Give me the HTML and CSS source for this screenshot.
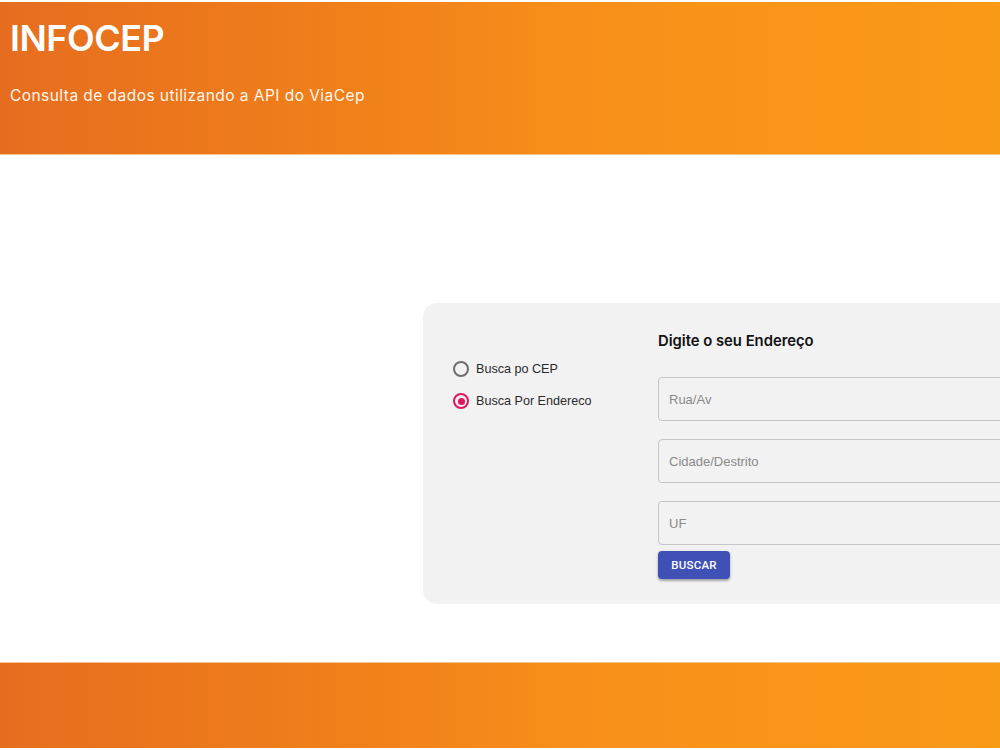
FILE: index.html
```html
<!DOCTYPE html>
<html lang="pt-BR">
<head>
<meta charset="utf-8">
<title>INFOCEP</title>
<link rel="stylesheet" href="styles.css">
</head>
<body>
<header class="topbar">
  <h1 class="title">INFOCEP</h1>
  <p class="subtitle">Consulta de dados utilizando a API do ViaCep</p>
</header>
<main class="content">
  <section class="card">
    <div class="options">
      <label class="option">
        <span class="radio"></span>
        <span class="option-text">Busca po CEP</span>
      </label>
      <label class="option">
        <span class="radio checked"></span>
        <span class="option-text">Busca Por Endereco</span>
      </label>
    </div>
    <form class="form">
      <h2 class="form-title">Digite o seu Endereço</h2>
      <div class="field"><input class="input" placeholder="Rua/Av"></div>
      <div class="field"><input class="input" placeholder="Cidade/Destrito"></div>
      <div class="field last"><input class="input" placeholder="UF"></div>
      <button type="button" class="btn">BUSCAR</button>
    </form>
  </section>
</main>
<footer class="bottombar"></footer>
</body>
</html>
```

FILE: styles.css
```css
html, body {
  margin: 0;
  padding: 0;
  background: #ffffff;
}
body {
  padding-top: 2px;
  overflow: hidden;
  width: 1000px;
  font-family: "Liberation Sans", Arial, sans-serif;
}
.topbar, .bottombar {
  background: linear-gradient(90deg, #e66d1f 0%, #f0801a 35%, #f8901a 60%, #f99a17 100%);
}
.topbar {
  height: 153px;
  box-sizing: border-box;
  padding: 16px 10px 0;
  color: #ffffff;
  border-bottom: 1px solid #f4c58f;
}
.title {
  margin: 0;
  font-family: Inter, "Open Sans", sans-serif;
  font-weight: 600;
  font-size: 36px;
  line-height: 40px;
  letter-spacing: -0.5px;
}
.subtitle {
  margin: 28px 0 0;
  font-family: Inter, "Open Sans", sans-serif;
  font-size: 15.5px;
  line-height: 20px;
  letter-spacing: 0.45px;
  color: #fff6ec;
}
.content {
  height: 507px;
  box-sizing: border-box;
  padding: 148px 0 0 423px;
}
.card {
  width: 640px;
  height: 301px;
  box-sizing: border-box;
  background: #f2f2f2;
  border-radius: 14px;
  display: flex;
  padding: 28px 0 0 29px;
}
.options {
  width: 206px;
  padding-top: 28px;
  display: flex;
  flex-direction: column;
  gap: 12px;
}
.option {
  display: flex;
  align-items: center;
  height: 20px;
  gap: 7px;
  font-size: 12.6px;
  color: #2b2b2b;
}
.radio {
  width: 12px;
  height: 12px;
  border: 2px solid #6e6e6e;
  border-radius: 50%;
  box-sizing: content-box;
  display: inline-flex;
  align-items: center;
  justify-content: center;
  margin-left: 1px;
}
.radio.checked {
  border-color: #e0175e;
}
.radio.checked::after {
  content: "";
  width: 7px;
  height: 7px;
  border-radius: 50%;
  background: #e0175e;
}
.form {
  display: flex;
  flex-direction: column;
  align-items: flex-start;
}
.form-title {
  margin: 0 0 26px;
  font-family: Inter, "Open Sans", sans-serif;
  font-weight: 600;
  font-size: 14.8px;
  line-height: 20px;
  color: #111111;
}
.field {
  margin-bottom: 18px;
}
.field.last {
  margin-bottom: 6px;
}
.input {
  width: 400px;
  height: 44px;
  box-sizing: border-box;
  border: 1px solid #c6c6c6;
  border-radius: 4px;
  background: transparent;
  padding: 0 10px;
  font-family: "Liberation Sans", Arial, sans-serif;
  font-size: 13px;
  color: #333;
  outline: none;
}
.input::placeholder {
  color: #8a8a8a;
}
.btn {
  width: 72px;
  height: 28px;
  border: none;
  border-radius: 4px;
  background: #3f51b5;
  color: #ffffff;
  font-family: Roboto, "Liberation Sans", sans-serif;
  font-weight: 500;
  font-size: 11.5px;
  letter-spacing: 0.2px;
  box-shadow: 0 2px 2px rgba(0,0,0,0.25), 0 1px 4px rgba(0,0,0,0.12);
  padding: 0;
}
.bottombar {
  height: 86px;
  border-top: 1px solid #f4c58f;
  box-sizing: border-box;
}
```
